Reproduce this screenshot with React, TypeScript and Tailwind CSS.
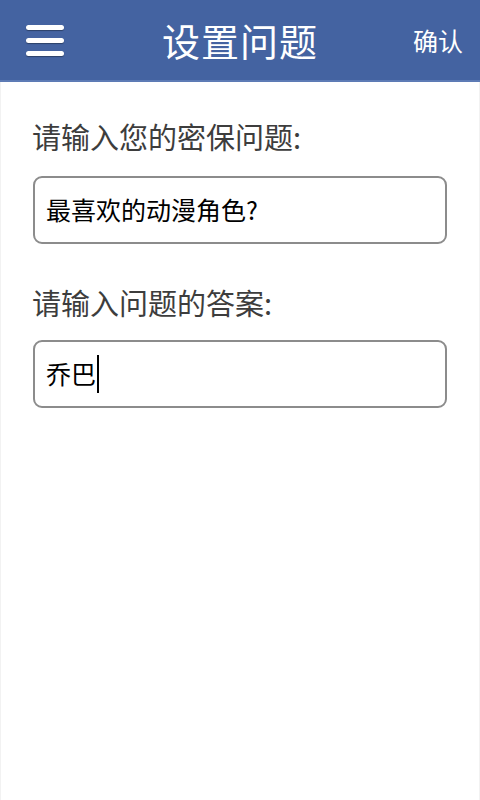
import React from "react";

const cjk = { fontFamily: '"Noto Sans CJK SC", "Noto Sans", sans-serif' };

function MenuIcon() {
  return (
    <div className="flex flex-col gap-[8px] w-[38px]">
      <span className="block h-[5px] rounded-full bg-white shadow-[0_1px_1px_rgba(0,0,0,0.35)]" />
      <span className="block h-[5px] rounded-full bg-white shadow-[0_1px_1px_rgba(0,0,0,0.35)]" />
      <span className="block h-[5px] rounded-full bg-white shadow-[0_1px_1px_rgba(0,0,0,0.35)]" />
    </div>
  );
}

export default function App() {
  return (
    <div className="w-[480px] h-[800px] bg-white flex flex-col" style={cjk}>
      <header className="h-[82px] bg-[#4463a1] border-b-2 border-[#5d7bb5] flex items-center justify-between pl-[26px] pr-[17px] relative">
        <MenuIcon />
        <h1 className="absolute left-0 right-0 text-center text-white text-[38px] leading-none tracking-[1px] pointer-events-none">
          设置问题
        </h1>
        <span className="text-white text-[25px] leading-none">确认</span>
      </header>
      <main className="flex-1 px-[32px] border-x border-[#f2f2f2]">
        <p className="mt-[36px] -ml-[1px] text-[29px] leading-[37px] text-[#3d3d3d]">请输入您的密保问题:</p>
        <div className="mt-[21px] h-[68px] border-2 border-[#8c8c8c] rounded-[9px] flex items-center px-[11px] text-[25px] text-black">
          最喜欢的动漫角色?
        </div>
        <p className="mt-[40px] -ml-[1px] text-[29px] leading-[37px] text-[#3d3d3d]">请输入问题的答案:</p>
        <div className="mt-[19px] h-[68px] border-2 border-[#8c8c8c] rounded-[9px] flex items-center px-[11px] text-[25px] text-black">
          <span>乔巴</span>
          <span className="inline-block w-[2px] h-[38px] bg-black ml-[1px]" />
        </div>
      </main>
    </div>
  );
}
